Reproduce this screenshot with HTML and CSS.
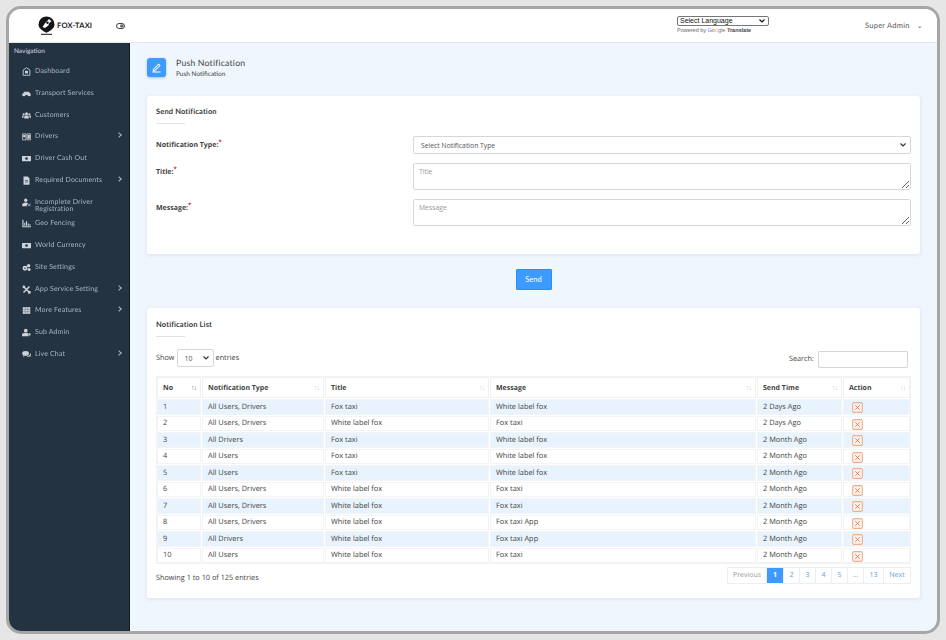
FILE: index.html
```html
<!DOCTYPE html>
<html lang="en">
<head>
    <meta charset="UTF-8">
    <title>Push Notification</title>
    <link rel="stylesheet" href="styles.css">
</head>
<body>
<svg class="defs" width="0" height="0">
    <symbol id="del" viewBox="0 0 12 12">
        <rect x=".7" y=".7" width="10.600" height="10.600" rx="1.500" fill="#fdf3ea" stroke="#eeb08f" stroke-width="1.200"/>
        <path d="M3.500 3.500l5 5M8.500 3.500l-5 5" stroke="#e4604a" stroke-width=".8"/>
    </symbol>
</svg>
<div class="frame">
    <header class="topbar">
        <div class="logo">
            <svg width="17" height="19" viewBox="0 0 17 19">
                <path d="M8.500 0.500a8 8 0 0 1 8 8c0 3.800-4 6.400-8 8.200-4-1.800-8-4.400-8-8.200a8 8 0 0 1 8-8z" fill="#151515"/>
                <path d="M11 3l2.500 2.200-2.200 1.800-1 2.500-3.300 2.500-2.500-1 2.300-3.500z" fill="#fff"/>
                <circle cx="9.500" cy="6.800" r="1.200" fill="#151515"/>
                <rect x="3" y="17.800" width="11" height="1" fill="#151515"/>
            </svg>
            <span class="logo-text">FOX-TAXI</span>
        </div>
        <svg class="toggle" width="9" height="6" viewBox="0 0 9 6">
            <rect x=".5" y=".5" width="8" height="5" rx="2.500" fill="#fff" stroke="#444"/>
            <circle cx="5.800" cy="3" r="1.800" fill="#666"/>
        </svg>
        <div class="translate">
            <select class="lang"><option>Select Language</option></select>
            <div class="powered">Powered by <span class="g-blue">G</span><span class="g-red">o</span><span class="g-yel">o</span><span class="g-blue">g</span><span class="g-grn">l</span><span class="g-red">e</span> <b>Translate</b></div>
        </div>
        <div class="admin">Super Admin <span class="caret">&#8964;</span></div>
    </header>
    <div class="main">
        <nav class="sidebar">
            <div class="nav-title">Navigation</div>
            <a class="nav-item"><svg viewBox="0 0 12 12"><path d="M6 1L1.500 4v7h9V4z" fill="none" stroke="currentColor" stroke-width="1.200"/><rect x="4" y="5" width="4" height="3.500" fill="currentColor"/></svg><span>Dashboard</span></a>
            <a class="nav-item"><svg viewBox="0 0 12 12"><circle cx="2.500" cy="7.500" r="2.300" fill="currentColor"/><circle cx="9.500" cy="7.500" r="2.300" fill="currentColor"/><path d="M2 3.500h7l2 2-3 2.500H4z" fill="currentColor"/></svg><span>Transport Services</span></a>
            <a class="nav-item"><svg viewBox="0 0 12 12"><circle cx="6" cy="3.500" r="2" fill="currentColor"/><circle cx="2.200" cy="4.500" r="1.400" fill="currentColor"/><circle cx="9.800" cy="4.500" r="1.400" fill="currentColor"/><path d="M3 10V7.500q0-1.500 1.500-1.500h3Q9 6 9 7.500V10zM0 9V7q0-1 1-1h1v3zM12 9V7q0-1-1-1h-1v3z" fill="currentColor"/></svg><span>Customers</span></a>
            <a class="nav-item has-sub"><svg viewBox="0 0 12 12"><path d="M.5 2.500h4.800v8H.5zM6.700 2.500h4.800v8H6.700z" fill="none" stroke="currentColor" stroke-width="1.100"/><rect x="1.500" y="4" width="3" height="3" fill="currentColor"/><rect x="7.500" y="4" width="3" height="5" fill="currentColor"/></svg><span>Drivers</span></a>
            <a class="nav-item"><svg viewBox="0 0 12 12"><rect y="2.500" width="12" height="7" rx=".5" fill="currentColor"/><circle cx="6" cy="6" r="1.800" fill="#243342"/></svg><span>Driver Cash Out</span></a>
            <a class="nav-item has-sub"><svg viewBox="0 0 12 12"><path d="M2 .5h5.500L10 3v8.500H2z" fill="currentColor"/><path d="M4 6h4M4 8h4" stroke="#243342" stroke-width=".8"/></svg><span>Required Documents</span></a>
            <a class="nav-item"><svg viewBox="0 0 12 12"><circle cx="5" cy="3" r="2.200" fill="currentColor"/><path d="M0 11q0-5 5-5 2 0 3 1l-2 4z" fill="currentColor"/><path d="M8 7.500l3.500 3.500M11.500 7.500L8 11" stroke="currentColor" stroke-width="1"/></svg><span>Incomplete Driver Registration</span></a>
            <a class="nav-item"><svg viewBox="0 0 12 12"><path d="M.5 1v10H12V9.500H2V1z" fill="currentColor"/><path d="M3 9V5h1.500v4zM5.300 9V3h1.500v6zM7.600 9V6h1.500v3zM9.900 9V7h1.500v2z" fill="currentColor"/></svg><span>Geo Fencing</span></a>
            <a class="nav-item"><svg viewBox="0 0 12 12"><rect y="2.500" width="12" height="7" rx=".5" fill="currentColor"/><circle cx="6" cy="6" r="1.800" fill="#243342"/></svg><span>World Currency</span></a>
            <a class="nav-item"><svg viewBox="0 0 12 12"><circle cx="4" cy="7" r="3.300" fill="currentColor"/><circle cx="8.800" cy="3.500" r="2.300" fill="currentColor"/><circle cx="9.500" cy="8.800" r="2" fill="currentColor"/><circle cx="4" cy="7" r="1" fill="#243342"/></svg><span>Site Settings</span></a>
            <a class="nav-item has-sub"><svg viewBox="0 0 12 12"><path d="M2 2l8 8M10 2l-8 8" stroke="currentColor" stroke-width="2"/><circle cx="2.500" cy="2.500" r="1.800" fill="currentColor"/><rect x="8" y="8" width="3.500" height="3.500" fill="currentColor"/></svg><span>App Service Setting</span></a>
            <a class="nav-item has-sub"><svg viewBox="0 0 12 12"><rect x="1" y="1.500" width="10" height="9" fill="currentColor"/><path d="M1 4.500h10M1 7.500h10M4.300 1.500v9M7.600 1.500v9" stroke="#243342" stroke-width=".4"/></svg><span>More Features</span></a>
            <a class="nav-item"><svg viewBox="0 0 12 12"><circle cx="5" cy="3.500" r="2.500" fill="currentColor"/><path d="M0 11V9q0-2.500 2.500-2.500h5Q9 6.500 9 9v2z" fill="currentColor"/><circle cx="10" cy="8.500" r="1.700" fill="currentColor" stroke="#243342" stroke-width=".5"/></svg><span>Sub Admin</span></a>
            <a class="nav-item has-sub"><svg viewBox="0 0 12 12"><ellipse cx="4.800" cy="4.500" rx="4.500" ry="3.200" fill="currentColor"/><path d="M2 7l-1 2 3-1zM6 8.500q2 .8 4 .2l1.500 1-.5-1.800q1-1 1-2 0-1-1-1.700 0 3.500-5 4.300z" fill="currentColor"/></svg><span>Live Chat</span></a>
        </nav>
        <main class="content">
            <div class="page-head">
                <div class="page-icon">
                    <svg width="11" height="11" viewBox="0 0 12 12"><path d="M2.500 8.200L8.300 2.400l1.500 1.500L4 9.500H2.500zM1.500 11h9" fill="none" stroke="#fff" stroke-width="1.100"/></svg>
                </div>
                <div>
                    <h1 class="page-title">Push Notification</h1>
                    <div class="page-sub">Push Notification</div>
                </div>
            </div>

            <section class="card form-card">
                <h2 class="card-title">Send Notification</h2>
                <div class="form-row row-select">
                    <label class="form-label">Notification Type:<sup>*</sup></label>
                    <select class="control"><option>Select Notification Type</option></select>
                </div>
                <div class="form-row">
                    <label class="form-label">Title:<sup>*</sup></label>
                    <textarea class="control area" placeholder="Title"></textarea>
                </div>
                <div class="form-row">
                    <label class="form-label">Message:<sup>*</sup></label>
                    <textarea class="control area" placeholder="Message"></textarea>
                </div>
            </section>

            <div class="send-wrap"><button class="send-btn">Send</button></div>

            <section class="card list-card">
                <h2 class="card-title">Notification List</h2>
                <div class="table-tools">
                    <div class="show">Show <select class="entries"><option>10</option></select> entries</div>
                    <div class="search">Search: <input class="search-box" type="text"></div>
                </div>
                <table class="data-table">
                    <colgroup>
                        <col class="c-no"><col class="c-type"><col class="c-title"><col class="c-msg"><col class="c-time"><col class="c-act">
                    </colgroup>
                    <thead>
                        <tr>
                            <th class="sorted">No</th>
                            <th>Notification Type</th>
                            <th>Title</th>
                            <th>Message</th>
                            <th>Send Time</th>
                            <th>Action</th>
                        </tr>
                    </thead>
                    <tbody>
                        <tr><td>1</td><td>All Users, Drivers</td><td>Fox taxi</td><td>White label fox</td><td>2 Days Ago</td><td><svg class="del"><use href="#del"/></svg></td></tr>
                        <tr><td>2</td><td>All Users, Drivers</td><td>White label fox</td><td>Fox taxi</td><td>2 Days Ago</td><td><svg class="del"><use href="#del"/></svg></td></tr>
                        <tr><td>3</td><td>All Drivers</td><td>Fox taxi</td><td>White label fox</td><td>2 Month Ago</td><td><svg class="del"><use href="#del"/></svg></td></tr>
                        <tr><td>4</td><td>All Users</td><td>Fox taxi</td><td>White label fox</td><td>2 Month Ago</td><td><svg class="del"><use href="#del"/></svg></td></tr>
                        <tr><td>5</td><td>All Users</td><td>Fox taxi</td><td>White label fox</td><td>2 Month Ago</td><td><svg class="del"><use href="#del"/></svg></td></tr>
                        <tr><td>6</td><td>All Users, Drivers</td><td>White label fox</td><td>Fox taxi</td><td>2 Month Ago</td><td><svg class="del"><use href="#del"/></svg></td></tr>
                        <tr><td>7</td><td>All Users, Drivers</td><td>White label fox</td><td>Fox taxi</td><td>2 Month Ago</td><td><svg class="del"><use href="#del"/></svg></td></tr>
                        <tr><td>8</td><td>All Users, Drivers</td><td>White label fox</td><td>Fox taxi App</td><td>2 Month Ago</td><td><svg class="del"><use href="#del"/></svg></td></tr>
                        <tr><td>9</td><td>All Drivers</td><td>White label fox</td><td>Fox taxi App</td><td>2 Month Ago</td><td><svg class="del"><use href="#del"/></svg></td></tr>
                        <tr><td>10</td><td>All Users</td><td>White label fox</td><td>Fox taxi</td><td>2 Month Ago</td><td><svg class="del"><use href="#del"/></svg></td></tr>
                    </tbody>
                </table>
                <div class="table-foot">
                    <div class="info">Showing 1 to 10 of 125 entries</div>
                    <div class="pager">
                        <a class="page prev">Previous</a>
                        <a class="page current">1</a>
                        <a class="page">2</a>
                        <a class="page">3</a>
                        <a class="page">4</a>
                        <a class="page">5</a>
                        <a class="page dots">...</a>
                        <a class="page">13</a>
                        <a class="page next">Next</a>
                    </div>
                </div>
            </section>
        </main>
    </div>
</div>
</body>
</html>
```

FILE: styles.css
```css
* {
    box-sizing: border-box;
}

html, body {
    margin: 0;
    height: 640px;
    overflow: hidden;
}

body {
    background-color: #e6e6e6;
    padding: 6px;
    font-family: "Open Sans", sans-serif;
    font-size: 7.300px;
    color: #444;
    text-rendering: geometricPrecision;
}

.defs {
    position: absolute;
}

.frame {
    width: 934px;
    height: 628px;
    border: 3px solid #a6a6a6;
    border-radius: 15px;
    overflow: hidden;
    display: flex;
    flex-direction: column;
    background-color: #f0f6fd;
    opacity: .999;
}

/* top bar */
.topbar {
    height: 34px;
    flex: none;
    background-color: #fff;
    border-bottom: 1px solid #e4e8ee;
    display: flex;
    align-items: center;
    position: relative;
}

.logo {
    margin-left: 29px;
    width: 78px;
    display: flex;
    align-items: center;
    gap: 2px;
}

.logo-text {
    font-family: Lato, sans-serif;
    font-size: 7.500px;
    font-weight: 700;
    color: #222;
    letter-spacing: .2px;
}

.toggle {
    flex: none;
}

.translate {
    margin-left: 552px;
    width: 188px;
    padding-bottom: 2px;
}

.lang {
    display: block;
    width: 92px;
    height: 10px;
    padding: 0 0 0 2px;
    font-family: "Liberation Sans", sans-serif;
    font-size: 7px;
    line-height: 8px;
    border: 1px solid #777;
    border-radius: 2px;
    color: #111;
    appearance: none;
    background: #fff url("data:image/svg+xml,%3Csvg xmlns='http://www.w3.org/2000/svg' width='6' height='4'%3E%3Cpath d='M.5.5L3 3 5.500.5' fill='none' stroke='%23111' stroke-width='1.200'/%3E%3C/svg%3E") no-repeat right 3px center;
}

.powered {
    margin-top: 2px;
    font-family: "Liberation Sans", sans-serif;
    font-size: 5.500px;
    color: #666;
}

.powered b {
    color: #444;
}

.g-blue { color: #4285f4; }
.g-red { color: #ea4335; }
.g-yel { color: #fbbc05; }
.g-grn { color: #34a853; }

.admin {
    font-family: Lato, sans-serif;
    font-size: 7.500px;
    color: #555;
    letter-spacing: .25px;
}

.caret {
    margin-left: 5px;
    font-size: 7px;
}

/* sidebar */
.main {
    flex: 1;
    display: flex;
    min-height: 0;
}

.sidebar {
    width: 121px;
    flex: none;
    background-color: #243342;
    border-right: 1px solid #101a24;
    font-family: Lato, sans-serif;
    color: #aab4be;
}

.nav-title {
    padding: 5px 5px 0;
    height: 18px;
    font-size: 6.500px;
    color: #d5dbe0;
}

.nav-item {
    height: 21.750px;
    padding: 7px 11px 0 13px;
    display: flex;
    align-items: flex-start;
    gap: 4px;
    font-size: 7px;
    line-height: 7px;
    letter-spacing: .15px;
    position: relative;
}

.nav-item svg {
    width: 9px;
    height: 9px;
    flex: none;
    margin-top: -1px;
    color: #cbd2d8;
}

.has-sub::after {
    content: "";
    position: absolute;
    right: 8px;
    top: 7px;
    width: 3px;
    height: 3px;
    border-top: .8px solid #aab4be;
    border-right: .8px solid #aab4be;
    transform: rotate(45deg);
}

/* content */
.content {
    flex: 1;
    padding: 15px 17px 0;
    min-width: 0;
}

.page-head {
    display: flex;
    align-items: center;
    gap: 10px;
    height: 19px;
    margin-bottom: 19px;
}

.page-icon {
    width: 19px;
    height: 19px;
    border-radius: 3px;
    background-color: #3d9bff;
    box-shadow: 0 1px 3px rgba(60, 120, 190, .4);
    display: flex;
    align-items: center;
    justify-content: center;
}

.page-title {
    margin: 0;
    font-family: Lato, sans-serif;
    font-size: 8.700px;
    line-height: 11px;
    font-weight: 400;
    color: #444;
    letter-spacing: .2px;
}

.page-sub {
    margin-top: 3px;
    font-family: Lato, sans-serif;
    font-size: 6.500px;
    line-height: 8px;
    color: #444;
}

.card {
    background-color: #fff;
    border-radius: 3px;
    box-shadow: 0 1px 4px rgba(120, 140, 170, .18);
    padding: 11px 9px 0;
}

.form-card {
    height: 158px;
}

.list-card {
    height: 290px;
    padding-top: 12px;
}

.card-title {
    margin: 0;
    font-family: Lato, sans-serif;
    font-size: 7.500px;
    line-height: 9px;
    font-weight: 700;
    color: #3a3a3a;
    position: relative;
    padding-bottom: 8px;
    letter-spacing: .15px;
}

.card-title::after {
    content: "";
    position: absolute;
    left: 0;
    bottom: 0;
    width: 29px;
    height: 1px;
    background-color: #dfe3e8;
}

.form-row {
    display: flex;
    margin-top: 9px;
}

.form-card .card-title {
    margin-bottom: 12px;
}

.row-select {
    height: 18px;
}

.form-label {
    width: 257px;
    flex: none;
    font-weight: 700;
    font-size: 7px;
    color: #444;
    padding-top: 5px;
}

.form-label sup {
    color: #e0202a;
    font-size: 6px;
    line-height: 0;
}

.control {
    flex: 1;
    min-width: 0;
    border: 1px solid #d4d8dd;
    border-radius: 2px;
    font-family: "Open Sans", sans-serif;
    font-size: 6.800px;
    color: #555;
    padding: 0 7px;
    background-color: #fff;
}

select.control, .entries {
    appearance: none;
    background: #fff url("data:image/svg+xml,%3Csvg xmlns='http://www.w3.org/2000/svg' width='6' height='4'%3E%3Cpath d='M.5.5L3 3 5.500.5' fill='none' stroke='%23333' stroke-width='1.200'/%3E%3C/svg%3E") no-repeat right 4px center;
}

.area {
    height: 27px;
    padding: 3px 5px;
    display: block;
}

.area::placeholder {
    color: #999;
}

.send-wrap {
    display: flex;
    justify-content: center;
    padding: 15px 0 18px;
}

.send-btn {
    width: 36px;
    height: 21px;
    border: 1px solid #2e8eef;
    border-radius: 1px;
    background-color: #3d9bff;
    color: #fff;
    font-family: Lato, sans-serif;
    font-size: 7.500px;
    padding: 0;
}

.table-tools {
    display: flex;
    justify-content: space-between;
    margin-top: 11px;
    height: 20px;
    padding-right: 3px;
}

.show, .search {
    display: flex;
    align-items: center;
    gap: 2px;
}

.search {
    gap: 4px;
    padding-top: 2px;
}

.entries {
    width: 37px;
    height: 18px;
    border: 1px solid #d4d8dd;
    border-radius: 2px;
    font-family: "Open Sans", sans-serif;
    font-size: 7px;
    color: #555;
    padding-left: 7px;
    background-color: #fff;
}

.search-box {
    width: 90px;
    height: 17px;
    border: 1px solid #d4d8dd;
    border-radius: 1px;
}

.data-table {
    margin-top: 8px;
    width: 755px;
    table-layout: fixed;
    border-collapse: separate;
    border-spacing: 1px;
    background-color: #fff;
    outline: 1px solid #f0f2f4;
    outline-offset: -1px;
}

.c-no { width: 44px; }
.c-type { width: 122px; }
.c-title { width: 164px; }
.c-msg { width: 266px; }
.c-time { width: 85px; }
.c-act { width: 67px; }

.data-table th {
    height: 21px;
    padding: 1px 5px 0;
    text-align: left;
    font-weight: 700;
    font-size: 7px;
    color: #444;
    border: 1px solid #f0f2f4;
    position: relative;
}

.data-table th::after {
    content: "\2191\2193";
    position: absolute;
    right: 4px;
    top: 6px;
    font-size: 7px;
    letter-spacing: -1px;
    font-weight: 400;
    color: #ccd0d4;
}

.data-table th.sorted::after {
    color: #777;
}

.data-table td {
    height: 15.500px;
    padding: 0 5px;
    border: 1px solid #f2f4f6;
    font-size: 7.400px;
    line-height: 8px;
    white-space: nowrap;
}

.data-table tbody tr:nth-child(odd) td {
    background-color: #e8f3fd;
}

.del {
    width: 11px;
    height: 11px;
    display: block;
    margin: 1px 0 -1px 3px;
}

.table-foot {
    display: flex;
    justify-content: space-between;
    align-items: center;
    margin-top: 3px;
}

.info {
    padding-top: 4px;
}

.pager {
    display: flex;
    height: 17px;
    border: 1px solid #eceff2;
    font-size: 7px;
}

.page {
    width: 16px;
    display: flex;
    align-items: center;
    justify-content: center;
    color: #6a9fdf;
    border-left: 1px solid #eceff2;
}

.page.prev {
    width: 38px;
    color: #999;
    border-left: none;
}

.page.next {
    width: 27px;
}

.page.current {
    width: 17px;
    background-color: #3d9bff;
    color: #fff;
    font-weight: 700;
}

.page.dots {
    width: 16px;
    color: #999;
}

.page:nth-last-child(2) {
    width: 20px;
}
```
